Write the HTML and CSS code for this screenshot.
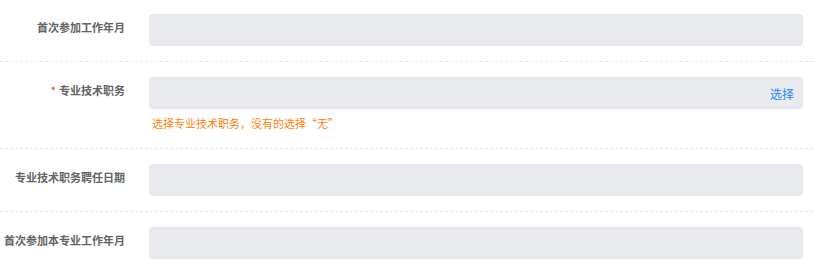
FILE: index.html
```html
<!DOCTYPE html>
<html lang="zh">
<head>
<meta charset="utf-8">
<link rel="stylesheet" href="styles.css">
</head>
<body>
<div class="form">
  <div class="row first">
    <div class="label">首次参加工作年月</div>
    <div class="field"><div class="input"></div></div>
  </div>
  <div class="row">
    <div class="label"><span class="req">*</span>专业技术职务</div>
    <div class="field">
      <div class="input"><span class="pick">选择</span></div>
      <div class="hint">选择专业技术职务，没有的选择“无”</div>
    </div>
  </div>
  <div class="row">
    <div class="label">专业技术职务聘任日期</div>
    <div class="field"><div class="input"></div></div>
  </div>
  <div class="row last">
    <div class="label">首次参加本专业工作年月</div>
    <div class="field"><div class="input"></div></div>
  </div>
</div>
</body>
</html>
```
FILE: styles.css
```css
html, body {
  margin: 0;
  padding: 0;
  background: #ffffff;
}
body {
  font-family: "Noto Sans CJK SC", "Noto Sans", sans-serif;
  font-size: 11px;
  width: 813px;
  height: 270px;
  overflow: hidden;
}
.form {
  display: flex;
  flex-direction: column;
}
.row {
  display: flex;
  align-items: flex-start;
  gap: 24px;
  padding: 15px 10px 15px 0;
  border-bottom: 1px dashed #e6e6e6;
}
.row.first {
  padding-top: 14px;
}
.row.last {
  border-bottom: none;
}
.label {
  width: 125px;
  flex: none;
  text-align: right;
  line-height: 26px;
  color: #646464;
  font-weight: 700;
  white-space: nowrap;
}
.req {
  color: #f5222d;
  font-weight: 400;
  margin-right: 3px;
}
.field {
  flex: 1;
  display: flex;
  flex-direction: column;
}
.input {
  height: 32px;
  box-sizing: border-box;
  background: #e8eaed;
  border: 1px solid #e4e6e9;
  border-radius: 4px;
  display: flex;
  align-items: center;
  justify-content: flex-end;
  padding-right: 8px;
}
.pick {
  color: #2b88f0;
  font-size: 12px;
}
.hint {
  padding-top: 4px;
  line-height: 20px;
  color: #ff7f0f;
  padding-left: 3px;
}
```
